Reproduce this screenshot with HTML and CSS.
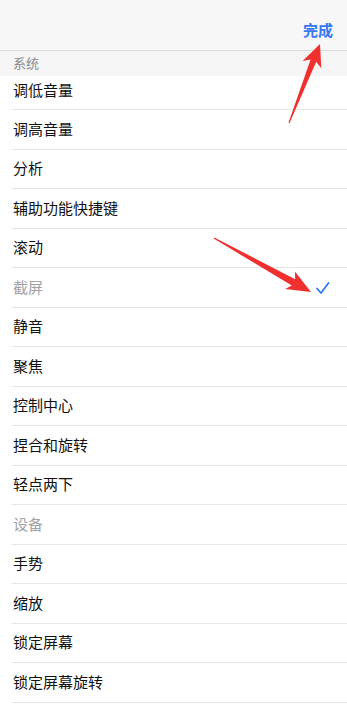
FILE: index.html
```html
<!DOCTYPE html>
<html lang="zh">
<head>
<meta charset="utf-8">
<link rel="stylesheet" href="styles.css">
</head>
<body>
<div class="page">
  <header class="nav">
    <span class="done">完成</span>
  </header>
  <div class="section">系统</div>
  <ul class="list">
    <li class="row first"><span>调低音量</span></li>
    <li class="row"><span>调高音量</span></li>
    <li class="row"><span>分析</span></li>
    <li class="row"><span>辅助功能快捷键</span></li>
    <li class="row"><span>滚动</span></li>
    <li class="row muted"><span>截屏</span>
      <svg class="check" width="14" height="13" viewBox="0 0 14 13"><polyline points="1,6.5 5,11 12.5,1" fill="none" stroke="#3478f6" stroke-width="1.8" stroke-linecap="round" stroke-linejoin="round"/></svg>
    </li>
    <li class="row"><span>静音</span></li>
    <li class="row"><span>聚焦</span></li>
    <li class="row"><span>控制中心</span></li>
    <li class="row"><span>捏合和旋转</span></li>
    <li class="row"><span>轻点两下</span></li>
    <li class="row muted"><span>设备</span></li>
    <li class="row"><span>手势</span></li>
    <li class="row"><span>缩放</span></li>
    <li class="row"><span>锁定屏幕</span></li>
    <li class="row"><span>锁定屏幕旋转</span></li>
  </ul>
  <svg class="arrows" width="347" height="704" viewBox="0 0 347 704">
    <polygon fill="#f0302e" points="288.5,122.8 310.6,59.6 302.7,60.9 320,44 321.3,68.2 316.2,61.8 289.5,123.2"/>
    <polygon fill="#f0302e" points="214.3,237.4 295.2,279.2 294.9,271.6 311,292 285.1,289 291.8,285.4 213.7,238.6"/>
  </svg>
</div>
</body>
</html>
```
FILE: styles.css
```css
html, body {
  margin: 0;
  padding: 0;
  background: #ffffff;
}
body {
  font-family: "Noto Sans CJK SC", "Noto Sans", sans-serif;
  overflow: hidden;
}
.page {
  position: relative;
  width: 347px;
  height: 704px;
  overflow: hidden;
}
.nav {
  box-sizing: border-box;
  height: 51px;
  background: #f7f7f7;
  border-bottom: 1px solid #dcdcdc;
  display: flex;
  align-items: center;
  justify-content: flex-end;
  padding: 10px 14px 0 0;
}
.done {
  color: #3478f6;
  font-size: 15px;
  font-weight: 700;
  line-height: 20px;
}
.section {
  box-sizing: border-box;
  height: 25px;
  background: #f5f5f5;
  color: #8a8a8e;
  font-size: 13px;
  line-height: 23px;
  padding: 0 0 2px 13px;
}
.list {
  list-style: none;
  margin: 0;
  padding: 0 0 0 12px;
}
.row {
  box-sizing: border-box;
  height: 39.53px;
  border-bottom: 1px solid #e6e6e6;
  display: flex;
  align-items: center;
  justify-content: space-between;
  padding: 0 17px 2px 1px;
  font-size: 15px;
  color: #111111;
}
.row.first {
  height: 34px;
  padding-bottom: 7px;
}
.row.muted {
  color: #a2a2a6;
}
.check {
  display: block;
  margin-top: 4px;
}
.arrows {
  position: absolute;
  left: 0;
  top: 0;
  pointer-events: none;
}
```
